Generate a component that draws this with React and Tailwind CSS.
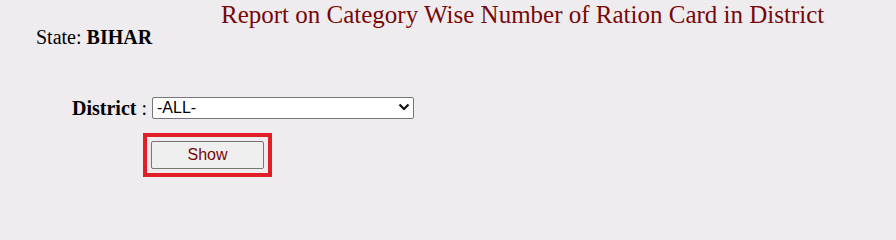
import React from "react";

export default function App() {
    return (
        <div className="w-[896px] min-h-screen bg-[#eeecef] text-black font-['Liberation_Serif','Times_New_Roman',serif] overflow-hidden">
            <h1 className="pl-[221px] pt-[1px] text-[25px] leading-[28px] text-[#780707] font-normal whitespace-nowrap">
                Report on Category Wise Number of Ration Card in District
            </h1>
            <div className="pl-[36px] -mt-[3px] text-[20px] leading-[23px]">
                State: <b>BIHAR</b>
            </div>
            <div className="flex items-center pl-[72px] mt-[47px]">
                <span className="text-[20px] font-bold leading-[23px]">District</span>
                <span className="text-[20px] leading-[23px] ml-[5px] mr-[5px]">:</span>
                <div className="relative">
                    <select
                        defaultValue="all"
                        className="appearance-none w-[262px] h-[22px] bg-white border border-[#767676] rounded-[2px] pl-[4px] text-[16px] leading-[20px] font-['Liberation_Sans',Arial,sans-serif] text-black"
                    >
                        <option value="all">-ALL-</option>
                    </select>
                    <svg className="absolute right-[4px] top-[7px] w-[12px] h-[8px] pointer-events-none" viewBox="0 0 12 8">
                        <path d="M1.5 1.5 L6 6 L10.5 1.5" fill="none" stroke="#111" strokeWidth="2.2" />
                    </svg>
                </div>
            </div>
            <div className="pl-[143px] mt-[13px]">
                <div className="inline-flex border-[4px] border-[#e21f26] p-[4px]">
                    <button
                        type="button"
                        className="w-[113px] h-[28px] bg-[#efefef] border border-[#767676] rounded-[2px] text-[16px] text-[#780707] font-['Liberation_Sans',Arial,sans-serif]"
                    >
                        Show
                    </button>
                </div>
            </div>
        </div>
    );
}
